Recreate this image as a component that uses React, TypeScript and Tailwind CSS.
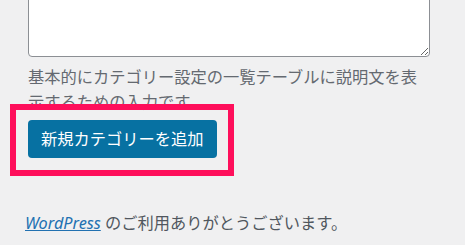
export default function App() {
  return (
    <div className="min-h-[245px] w-[465px] overflow-hidden bg-[#f0f0f1] font-['Noto_Sans','Noto_Sans_CJK_JP',sans-serif]">
      <div className="pl-[28px] pr-[35px]">
        {/* description field */}
        <textarea
          className="-mt-[20px] block h-[77px] w-full resize-y rounded-[4px] border border-[#8c8f94] bg-white"
          defaultValue=""
        />
        <p className="mt-[8px] text-[16.25px] leading-[25px] text-[#646970]">
          基本的にカテゴリー設定の一覧テーブルに説明文を表示するための入力です。
        </p>

        <div className="relative mt-[5px] inline-block">
          <button className="h-[38px] rounded-[4px] bg-[#0771a2] px-[13px] text-[16.25px] leading-[38px] text-white">
            新規カテゴリーを追加
          </button>
          {/* highlight */}
          <div className="pointer-events-none absolute -top-[16px] -bottom-[18px] -left-[18px] -right-[17px] border-[6px] border-[#fe0f5b]" />
        </div>
      </div>

      <p className="mt-[53px] pl-[25px] text-[16.25px] leading-[25px] text-[#50575e]">
        <a href="#" className="italic text-[#2271b1] underline">
          WordPress
        </a>{' '}
        のご利用ありがとうございます。
      </p>
    </div>
  );
}
